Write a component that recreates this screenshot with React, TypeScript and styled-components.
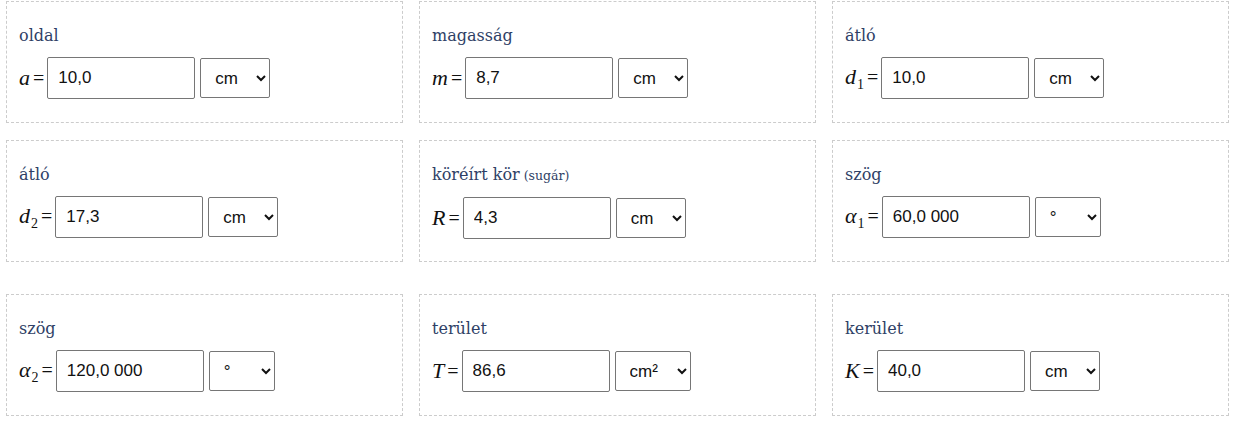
import * as React from 'react';
import styled, { createGlobalStyle } from 'styled-components';

const GlobalStyle = createGlobalStyle`
  html, body {
    margin: 0;
    padding: 0;
    background: #fff;
  }
`;

type Field = {
  label: string;
  note?: string;
  sym: string;
  sub?: string;
  value: string;
  unit: string;
  unitWidth: number;
};

const groups: Field[][] = [
  [
    { label: 'oldal', sym: 'a', value: '10,0', unit: 'cm', unitWidth: 70 },
    { label: 'magasság', sym: 'm', value: '8,7', unit: 'cm', unitWidth: 70 },
    { label: 'átló', sym: 'd', sub: '1', value: '10,0', unit: 'cm', unitWidth: 70 },
    { label: 'átló', sym: 'd', sub: '2', value: '17,3', unit: 'cm', unitWidth: 70 },
    { label: 'köréírt kör', note: '(sugár)', sym: 'R', value: '4,3', unit: 'cm', unitWidth: 70 },
    { label: 'szög', sym: 'α', sub: '1', value: '60,0 000', unit: '°', unitWidth: 66 },
  ],
  [
    { label: 'szög', sym: 'α', sub: '2', value: '120,0 000', unit: '°', unitWidth: 66 },
    { label: 'terület', sym: 'T', value: '86,6', unit: 'cm²', unitWidth: 76 },
    { label: 'kerület', sym: 'K', value: '40,0', unit: 'cm', unitWidth: 70 },
  ],
];

export default function App() {
  return (
    <>
      <GlobalStyle />
      <Page>
        {groups.map((group, gi) => (
          <Grid key={gi}>
            {group.map((f, i) => (
              <Card key={i}>
                <Label>
                  {f.label}
                  {f.note && <Note> {f.note}</Note>}
                </Label>
                <Row>
                  <Math>
                    <Sym>{f.sym}</Sym>
                    {f.sub && <Sub>{f.sub}</Sub>}
                    <Eq>=</Eq>
                  </Math>
                  <Input defaultValue={f.value} />
                  <Select $w={f.unitWidth} defaultValue={f.unit}>
                    <option>{f.unit}</option>
                  </Select>
                </Row>
              </Card>
            ))}
          </Grid>
        ))}
      </Page>
    </>
  );
}

const Page = styled.div`
  display: flex;
  flex-direction: column;
  gap: 32px;
  padding: 1px 0 0 6px;
`;

const Grid = styled.div`
  display: grid;
  grid-template-columns: repeat(3, 397px);
  column-gap: 16px;
  row-gap: 17px;
`;

const Card = styled.div`
  box-sizing: border-box;
  height: 122px;
  border: 1px dashed #cccccc;
  padding: 23px 12px 0 12px;
`;

const Label = styled.div`
  font-family: 'DejaVu Serif', 'Liberation Serif', serif;
  font-size: 16px;
  line-height: 22px;
  color: #2f3f66;
  margin-bottom: 10px;
`;

const Note = styled.span`
  font-size: 12.5px;
`;

const Row = styled.div`
  display: flex;
  align-items: center;
  height: 42px;
`;

const Math = styled.span`
  display: inline-block;
  white-space: nowrap;
  font-family: 'Liberation Serif', serif;
  color: #111;
  margin-right: 3px;
`;

const Sym = styled.i`
  font-size: 22px;
  font-style: italic;
`;

const Sub = styled.span`
  font-size: 14px;
  vertical-align: -5px;
  margin-left: 1px;
`;

const Eq = styled.span`
  font-size: 20px;
  margin-left: 3px;
`;

const Input = styled.input`
  box-sizing: border-box;
  width: 148px;
  height: 42px;
  border: 1px solid #767676;
  border-radius: 2px;
  padding: 0 10px;
  font-family: 'Liberation Sans', Arial, sans-serif;
  font-size: 17px;
  color: #111;
  background: #fff;
`;

const Select = styled.select<{ $w: number }>`
  box-sizing: border-box;
  width: ${(p) => p.$w}px;
  height: 40px;
  margin-left: 5px;
  border: 1px solid #767676;
  border-radius: 2px;
  padding: 0 0 0 10px;
  font-family: 'Liberation Sans', Arial, sans-serif;
  font-size: 17px;
  color: #111;
  background: #fff;
`;
